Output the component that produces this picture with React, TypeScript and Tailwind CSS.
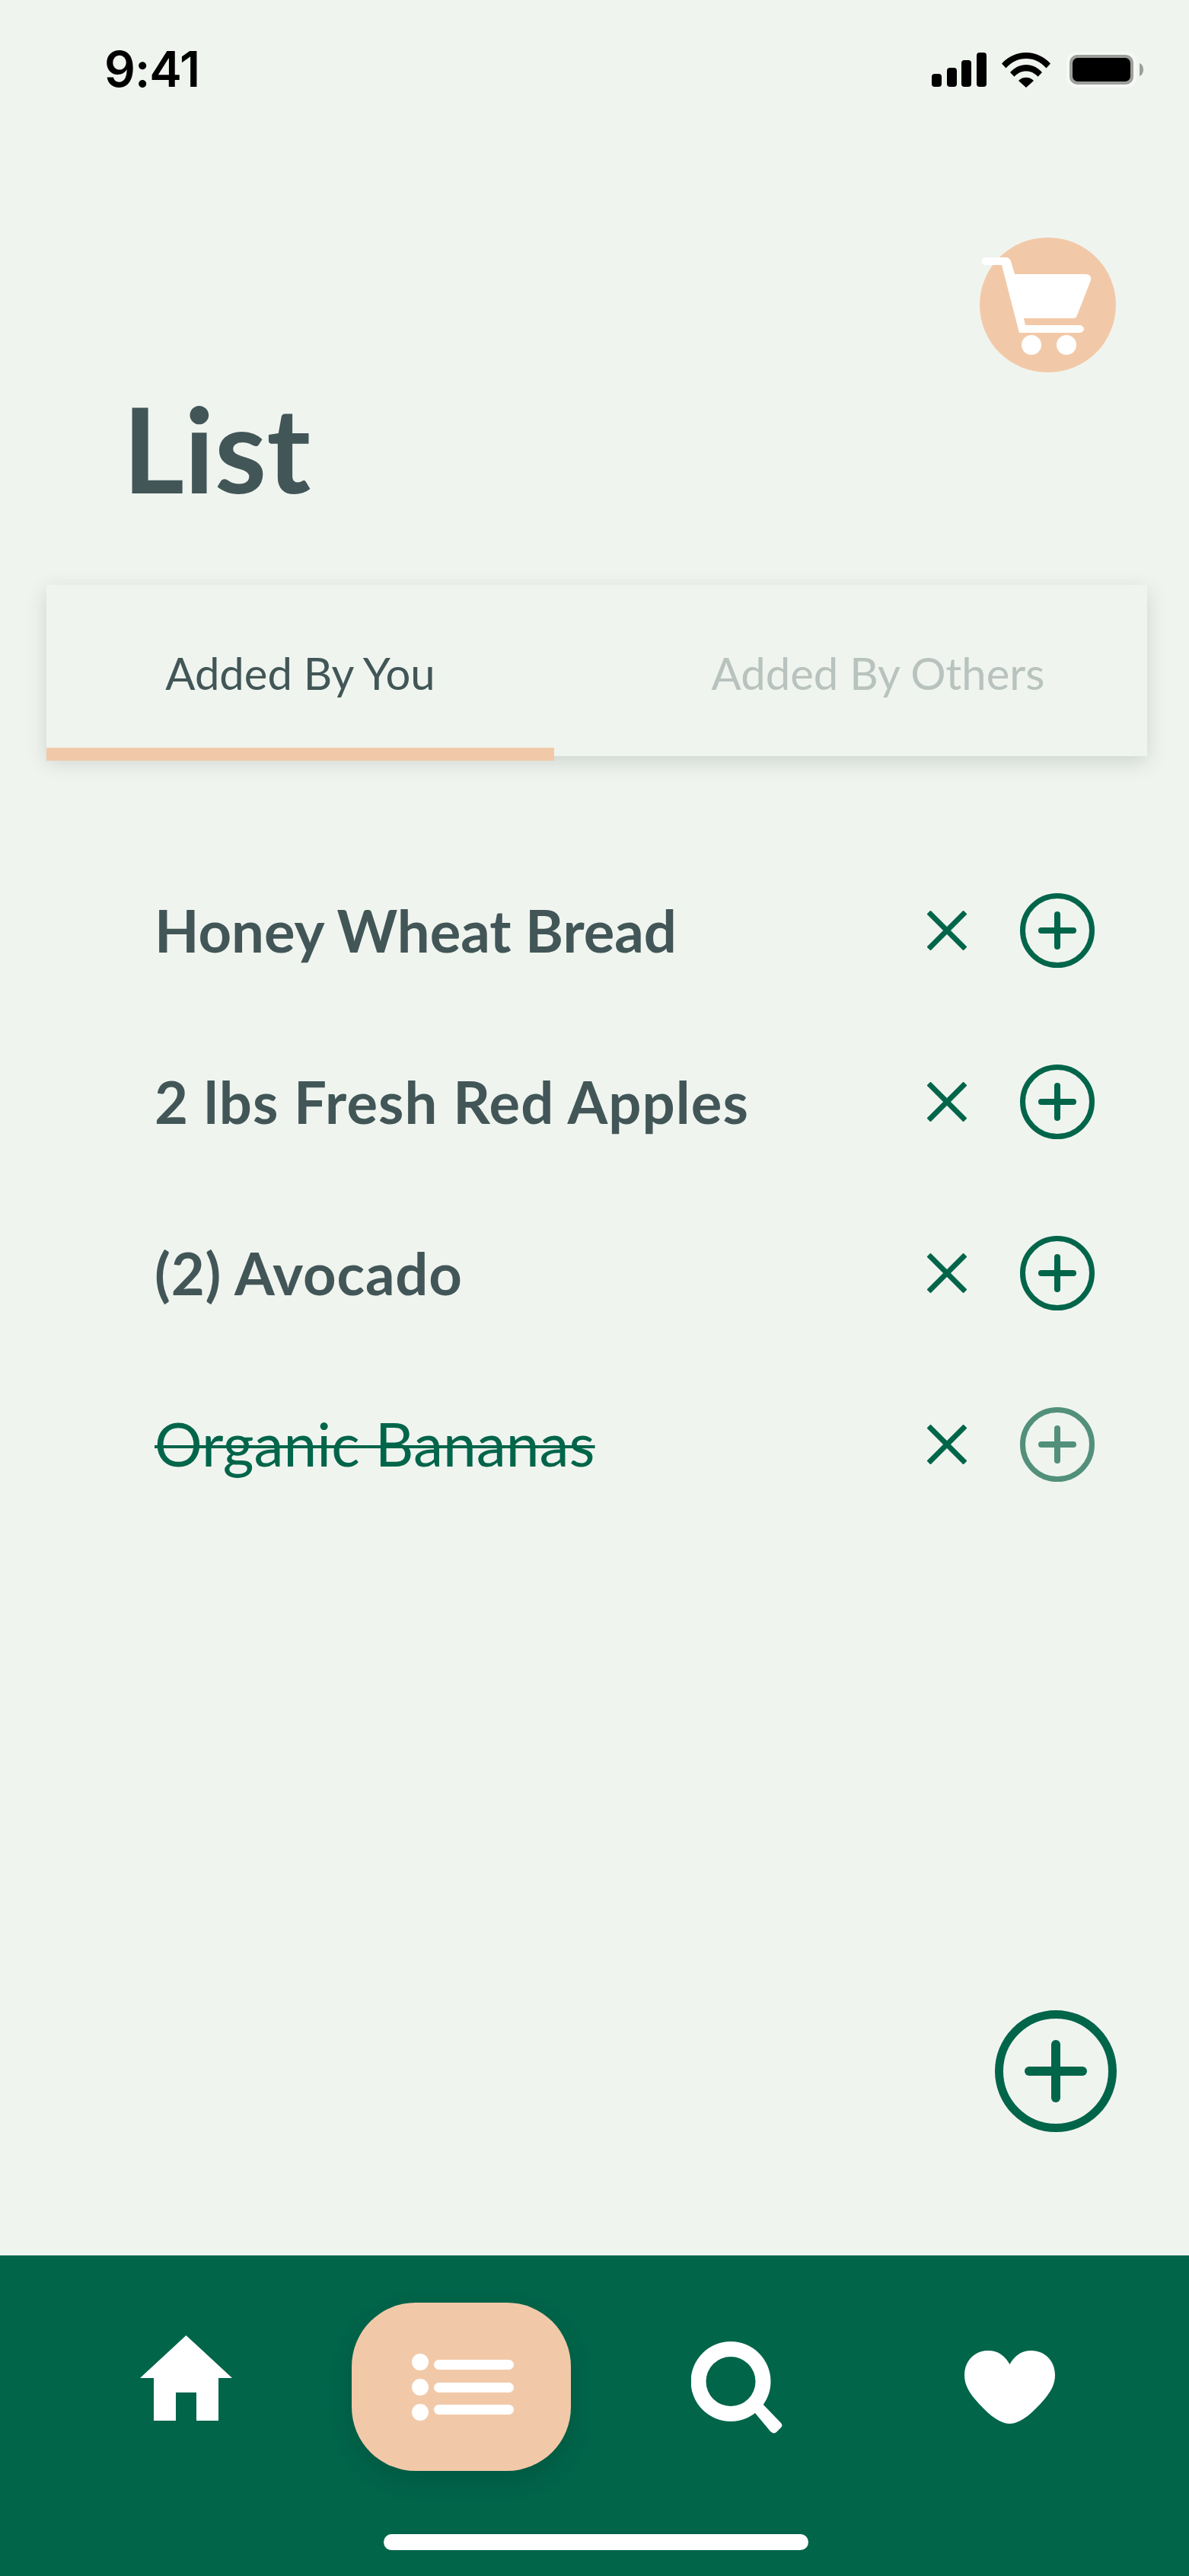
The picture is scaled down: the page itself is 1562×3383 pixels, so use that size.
import React from 'react';
import { Plus } from 'lucide-react';

const items = [
  { name: 'Honey Wheat Bread', done: false, spacing: 'tracking-normal' },
  { name: '2 lbs Fresh Red Apples', done: false, spacing: 'tracking-[1.1px]' },
  { name: '(2) Avocado', done: false, spacing: 'tracking-[0.8px]' },
  { name: 'Organic Bananas', done: true, spacing: 'tracking-normal' },
];

const StatusIcons = () => (
  <div className="flex items-center">
    <svg width="72" height="46" viewBox="0 0 72 46" fill="#000">
      <rect x="0" y="28" width="13" height="17" rx="4" />
      <rect x="20" y="20" width="13" height="25" rx="4" />
      <rect x="39" y="10" width="13" height="35" rx="4" />
      <rect x="59" y="0" width="13" height="45" rx="4" />
    </svg>
    <svg className="ml-[20px]" width="64" height="46" viewBox="0 0 64 46" fill="#000">
      <path d="M0 14.5C8 5.5 19.5 0 32 0s24 5.5 32 14.5l-5.5 6C51.5 12.5 42.3 8 32 8S12.500 12.500 5.500 20.500z" />
      <path d="M11 26C17 19.500 24 16 32 16s15 3.500 21 10l-5.500 5.800C43.500 27 38 24.500 32 24.500S20.500 27 16.500 31.800z" />
      <path d="M22 37c2.700-2.800 6-4.300 10-4.300s7.300 1.500 10 4.300l-10 9z" />
    </svg>
    <svg className="ml-[21px]" width="101" height="47" viewBox="0 0 101 47">
      <rect x="0" y="0" width="92" height="47" rx="13" fill="#f6f8f5" />
      <rect x="4" y="4" width="84" height="39" rx="10" fill="#9d9f9b" />
      <rect x="8" y="8" width="76" height="31" rx="7" fill="#000" />
      <path d="M96 15c3 1 5 4.500 5 8.500s-2 7.500-5 8.500z" fill="#9d9f9b" />
    </svg>
  </div>
);

const CartIcon = () => (
  <svg width="146" height="128" viewBox="0 0 146 128" fill="#fff" className="absolute left-[3px] top-[26px]">
    <path d="M5 0h26c4 0 6 2 7 5l5 17h93c6 0 8 4 7 8l-18 46c-1 3-3 4-6 4H55l2 9h70c4 0 7 2 7 5s-3 5-7 5H49L26 10H5c-3 0-5-2-5-5s2-5 5-5z" />
    <circle cx="65" cy="115" r="13" />
    <circle cx="111" cy="115" r="13" />
  </svg>
);

const ListIcon = () => (
  <svg width="134" height="88" viewBox="0 0 134 88" fill="#fff" className="ml-[4px]">
    <ellipse cx="11" cy="11" rx="11" ry="11" />
    <ellipse cx="11" cy="44" rx="11" ry="11" />
    <ellipse cx="11" cy="77" rx="11" ry="11" />
    <rect x="29" y="8" width="105" height="13" rx="6.500" />
    <rect x="29" y="38" width="105" height="13" rx="6.500" />
    <rect x="29" y="67" width="105" height="13" rx="6.500" />
  </svg>
);

const CrossIcon = () => (
  <svg width="52" height="52" viewBox="0 0 52 52" stroke="#01654a" strokeWidth="7">
    <path d="M2 2l48 48M50 2L2 50" />
  </svg>
);

const App = () => {
  return (
    <div className="w-[1562px] h-[3383px] flex flex-col bg-[#f0f4ef] overflow-hidden font-['Lato',sans-serif]">
      <div className="flex justify-between items-start pt-[68px] pl-[137px] pr-[60px]">
        <span className="font-['Inter',sans-serif] font-semibold text-[64px] leading-[46px] tracking-[-1px] text-black">9:41</span>
        <StatusIcons />
      </div>

      <div className="flex justify-end pr-[96px] mt-[197px]">
        <button className="relative w-[179px] h-[177px] rounded-full bg-[#f2c9a8]">
          <CartIcon />
        </button>
      </div>

      <h1 className="pl-[161px] mt-[22px] text-[156px] leading-[154px] font-bold text-[#425657]">List</h1>

      <div className="relative ml-[61px] mr-[55px] mt-[103px] h-[225px] pt-[6px] bg-[#eff4ee] flex items-center shadow-[0_8px_24px_rgba(50,70,60,0.18)]">
        <div className="w-[667px] text-center text-[58px] text-[#425657]">Added By You</div>
        <div className="flex-1 pl-[72px] text-center text-[58px] text-[#b8c2be]">Added By Others</div>
        <div className="absolute left-0 top-[214px] w-[667px] h-[17px] bg-[#f2c9a8]" />
      </div>

      <div className="flex flex-col gap-[126px] pl-[203px] pr-[124px] mt-[179px]">
        {items.map((item) => (
          <div key={item.name} className="flex items-center justify-between h-[99px]">
            {item.done ? (
              <span className="text-[78.5px] font-normal text-[#01654a] line-through decoration-[4px]">{item.name}</span>
            ) : (
              <span className={`text-[76px] font-bold text-[#425657] ${item.spacing}`}>{item.name}</span>
            )}
            <div className="flex items-center gap-[70px]">
              <CrossIcon />
              <div className={item.done
                ? 'w-[98px] h-[98px] rounded-full border-[7px] border-[#52907b] text-[#52907b] flex items-center justify-center'
                : 'w-[98px] h-[98px] rounded-full border-[7px] border-[#01654a] text-[#01654a] flex items-center justify-center'}>
                <Plus size={72} strokeWidth={2.670} className="shrink-0" />
              </div>
            </div>
          </div>
        ))}
      </div>

      <div className="flex justify-end pr-[95px] mt-[694px]">
        <div className="w-[160px] h-[160px] rounded-full border-[11px] border-[#01654a] text-[#01654a] flex items-center justify-center">
          <Plus size={120} strokeWidth={2.400} className="shrink-0" />
        </div>
      </div>

      <nav className="relative mt-auto h-[421px] bg-[#01654a]">
        <div className="flex items-start pl-[184px] pt-[62px]">
          <svg className="mt-[43px]" width="121" height="112" viewBox="0 0 121 112" fill="#fff">
            <path d="M60.500 0L121 56h-18v56H74V75H47v37H18V56H0z" />
          </svg>
          <button className="ml-[157px] w-[288px] h-[221px] rounded-[84px] bg-[#f2c9a8] flex items-center justify-center shadow-[0_12px_30px_rgba(0,40,30,0.2)]">
            <ListIcon />
          </button>
          <svg className="ml-[158px] mt-[51px]" width="120" height="121" viewBox="0 0 120 121" fill="#fff">
            <path fillRule="evenodd" d="M52 0a52 52 0 1 1 0 105A52 52 0 0 1 52 0zm0 20a32 32 0 1 0 0 65 32 32 0 0 0 0-65z" />
            <path d="M90 78l27 28c3 3 3 5 1 7l-6 6c-2 2-5 2-8-1L84 94c-2-2-2-4 0-6 3-2 5-5 6-10z" />
          </svg>
          <svg className="ml-[239px] mt-[63px]" width="119" height="96" viewBox="0 0 119 96" fill="#fff">
            <path d="M59.500 18C66 7 74 0 88 0c18 0 31 14 31 32 0 12-5 21-14 32-13 15-30 32-45.500 32S27 79 14 64C5 53 0 44 0 32 0 14 13 0 31 0c14 0 22 7 28.500 18z" />
          </svg>
        </div>
        <div className="absolute left-[504px] top-[366px] w-[558px] h-[21px] rounded-full bg-white" />
      </nav>
    </div>
  );
};

export default App;
